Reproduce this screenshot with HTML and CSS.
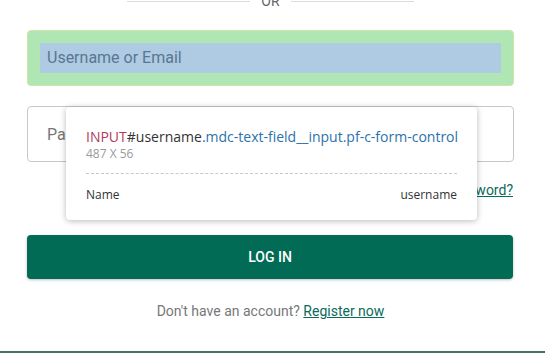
FILE: index.html
```html
<!DOCTYPE html>
<html lang="en">
<head>
<meta charset="utf-8">
<title>Log in</title>
<link rel="stylesheet" href="styles.css">
</head>
<body>
<main class="page">
  <div class="divider"><span class="divider-line"></span><span class="divider-text">OR</span><span class="divider-line"></span></div>
  <div class="field field-inspected">
    <div class="field-content">Username or Email</div>
  </div>
  <div class="field field-password">
    <span class="placeholder">Password</span>
  </div>
  <div class="forgot-row"><a class="link" href="#">Forgot Password?</a></div>
  <button class="login-btn" type="button">LOG IN</button>
  <p class="register">Don't have an account? <a class="link" href="#">Register now</a></p>
</main>
<div class="bottom-bar"></div>
<div class="inspect-tip">
  <div class="tip-title"><span class="tip-tag">INPUT</span><span class="tip-id">#username</span><span class="tip-class">.mdc-text-field__input.pf-c-form-control</span></div>
  <div class="tip-dims">487 X 56</div>
  <div class="tip-row"><span>Name</span><span>username</span></div>
</div>
</body>
</html>
```
FILE: styles.css
```css
html, body {
  margin: 0;
  padding: 0;
  background: #ffffff;
  overflow: hidden;
}
body {
  font-family: Roboto, "Liberation Sans", sans-serif;
  width: 545px;
  height: 353px;
  position: relative;
}
.page {
  display: flex;
  flex-direction: column;
  padding: 0 31px 0 27px;
}
.divider {
  display: flex;
  align-items: center;
  justify-content: center;
  height: 20px;
  margin-top: -9px;
}
.divider-line {
  width: 123px;
  height: 1px;
  background: #dcdcdc;
}
.divider-text {
  padding: 0 11px;
  font-size: 14px;
  line-height: 20px;
  color: #666666;
}
.field {
  box-sizing: border-box;
  height: 56px;
  border-radius: 4px;
}
.field-inspected {
  margin-top: 19px;
  background: #b0e6b3;
  border: 1px solid #d2e4a4;
  padding: 12px;
}
.field-content {
  height: 30px;
  background: #aecbe3;
  padding-left: 7px;
  font-size: 16px;
  line-height: 30px;
  color: #5a7690;
}
.field-password {
  margin-top: 20px;
  border: 1px solid #c8c8c8;
  display: flex;
  align-items: center;
  padding-left: 19px;
}
.placeholder {
  font-size: 16px;
  color: #777777;
}
.forgot-row {
  margin-top: 18px;
  display: flex;
  justify-content: flex-end;
  font-size: 14px;
  line-height: 20px;
  padding-right: 1px;
}
.link {
  color: #0b6a5b;
  text-decoration: underline;
}
.login-btn {
  margin-top: 35px;
  height: 44px;
  border: none;
  border-radius: 4px;
  background: #016b55;
  color: #ffffff;
  font-family: Roboto, "Liberation Sans", sans-serif;
  font-size: 14px;
  font-weight: 500;
  box-shadow: 0 1px 3px rgba(0, 0, 0, 0.25);
  width: 486px;
}
.register {
  margin: 22px 0 0;
  text-align: center;
  font-size: 14px;
  line-height: 20px;
  color: #777777;
}
.bottom-bar {
  position: absolute;
  left: 0;
  right: 0;
  top: 351px;
  height: 2px;
  background: #4a7062;
}
.inspect-tip {
  position: absolute;
  left: 66px;
  top: 107px;
  width: 411px;
  height: 113px;
  box-sizing: border-box;
  padding: 20px 20px 0 20px;
  background: #ffffff;
  border-radius: 4px;
  box-shadow: 0 1px 6px rgba(0, 0, 0, 0.28);
  font-family: "Open Sans", "DejaVu Sans", sans-serif;
}
.tip-title {
  font-size: 14px;
  line-height: 19px;
  color: #333333;
  white-space: nowrap;
}
.tip-tag {
  color: #b13b5b;
}
.tip-class {
  color: #2b72ab;
}
.tip-dims {
  font-size: 12px;
  line-height: 16px;
  color: #9a9a9a;
  padding-bottom: 11px;
  border-bottom: 1px dashed #c8c8c8;
}
.tip-row {
  margin-top: 13px;
  display: flex;
  justify-content: space-between;
  font-size: 12px;
  line-height: 16px;
  color: #333333;
}
```
